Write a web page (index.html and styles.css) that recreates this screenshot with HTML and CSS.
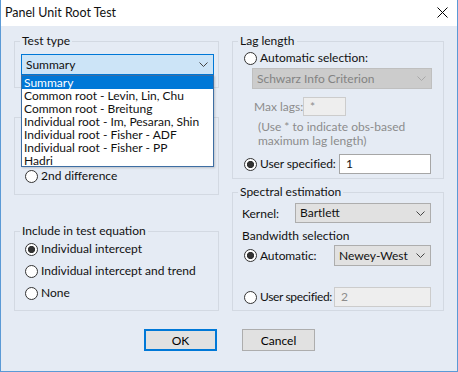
FILE: index.html
```html
<!DOCTYPE html>
<html>
<head>
<meta charset="utf-8">
<link rel="stylesheet" href="styles.css">
</head>
<body>
<div class="window">
  <div class="titlebar">
    <span class="title">Panel Unit Root Test</span>
    <svg class="close" width="11" height="11" viewBox="0 0 11 11"><path d="M0.5 0.5 L10.5 10.5 M10.5 0.5 L0.5 10.5" stroke="#000" stroke-width="1" fill="none"/></svg>
  </div>
  <div class="content">
    <div class="columns">
      <div class="col col-left">
        <fieldset class="group g-test">
          <legend>Test type</legend>
          <div class="gbody">
            <div class="combo-wrap">
              <div class="combo combo-focus"><span>Summary</span><svg class="chev" width="9" height="5" viewBox="0 0 9 5"><path d="M0.5 0.5 L4.5 4.5 L8.5 0.5" stroke="#444" fill="none"/></svg></div>
              <ul class="droplist">
                <li class="sel">Summary</li>
                <li>Common root - Levin, Lin, Chu</li>
                <li>Common root - Breitung</li>
                <li>Individual root - Im, Pesaran, Shin</li>
                <li>Individual root - Fisher - ADF</li>
                <li>Individual root - Fisher - PP</li>
                <li>Hadri</li>
              </ul>
            </div>
          </div>
        </fieldset>
        <fieldset class="group g-unit">
          <div class="gbody">
            <div class="radio-row"><span class="radio"></span><span>2nd difference</span></div>
          </div>
        </fieldset>
        <fieldset class="group g-include">
          <legend>Include in test equation</legend>
          <div class="gbody">
            <div class="radio-row first"><span class="radio checked"></span><span>Individual intercept</span></div>
            <div class="radio-row"><span class="radio"></span><span>Individual intercept and trend</span></div>
            <div class="radio-row"><span class="radio"></span><span>None</span></div>
          </div>
        </fieldset>
      </div>
      <div class="col col-right">
        <fieldset class="group g-lag">
          <legend>Lag length</legend>
          <div class="gbody">
            <div class="radio-row lag-auto"><span class="radio"></span><span>Automatic selection:</span></div>
            <div class="combo combo-disabled lag-combo"><span>Schwarz Info Criterion</span><svg class="chev" width="9" height="5" viewBox="0 0 9 5"><path d="M0.5 0.5 L4.5 4.5 L8.5 0.5" stroke="#a8a8a8" fill="none"/></svg></div>
            <div class="maxlags"><span class="dis-label maxlags-label">Max lags:</span><span class="field field-disabled maxlags-field">*</span></div>
            <div class="note dis-label">(Use * to indicate obs-based<br>maximum lag length)</div>
            <div class="radio-row user-row"><span class="radio checked"></span><span class="user-label">User specified:</span><span class="field user-field">1</span></div>
          </div>
        </fieldset>
        <fieldset class="group g-spec">
          <legend>Spectral estimation</legend>
          <div class="gbody">
            <div class="kernel-row"><span class="kernel-label">Kernel:</span><div class="combo kernel-combo"><span>Bartlett</span><svg class="chev" width="9" height="5" viewBox="0 0 9 5"><path d="M0.5 0.5 L4.5 4.5 L8.5 0.5" stroke="#444" fill="none"/></svg></div></div>
            <div class="bw-label">Bandwidth selection</div>
            <div class="radio-row bw-auto"><span class="radio checked"></span><span class="bw-text">Automatic:</span><div class="combo bw-combo"><span>Newey-West</span><svg class="chev" width="9" height="5" viewBox="0 0 9 5"><path d="M0.5 0.5 L4.5 4.5 L8.5 0.5" stroke="#444" fill="none"/></svg></div></div>
            <div class="radio-row bw-user"><span class="radio"></span><span class="bw-text bw-text-user">User specified:</span><span class="field field-disabled bw-field">2</span></div>
          </div>
        </fieldset>
      </div>
    </div>
    <div class="buttons">
      <button class="btn btn-default">OK</button>
      <button class="btn">Cancel</button>
    </div>
  </div>
</div>
</body>
</html>
```
FILE: styles.css
```css
* { box-sizing: border-box; }
html, body { margin: 0; padding: 0; }
body {
  font-family: Lato, "Noto Sans", sans-serif;
  font-size: 12px;
  color: #111;
  background: #e5ebf4;
}
.window {
  width: 458px;
  height: 372px;
  background: #e5ebf4;
  border-left: 1px solid #5b9ad6;
  border-right: 1px solid #5b9ad6;
  border-bottom: 1px solid #5b9ad6;
  display: flex;
  flex-direction: column;
}
.titlebar {
  height: 26px;
  flex: none;
  background: #fff;
  display: flex;
  align-items: center;
  padding-left: 4px;
  padding-right: 9px;
}
.title { flex: 1; font-size: 12.5px; line-height: 16px; padding-bottom: 1px; }
.close { display: block; margin-bottom: 1px; }
.content { padding: 7px 13px 0 13px; }
.columns { display: flex; gap: 13px; align-items: flex-start; }
.col { display: flex; flex-direction: column; }
.col-left { width: 205px; }
.col-right { width: 212px; }

fieldset.group {
  margin: 0;
  padding: 0;
  border: 1px solid #d3d9e2;
  min-width: 0;
  flex: none;
}
fieldset.group legend {
  padding: 0 2px;
  margin-left: 5px;
  line-height: 16px;
  height: 16px;
  white-space: nowrap;
}
fieldset.g-test { height: 55px; }
.g-test .gbody { padding-left: 6px; }
fieldset.g-unit { height: 78px; margin-top: 29px; }
.g-unit .gbody { padding-left: 10px; padding-top: 50px; }
fieldset.g-include { height: 88px; margin-top: 28px; }
.g-include .gbody { padding-left: 10px; }
fieldset.g-lag { height: 146px; }
.g-lag .gbody { padding-left: 11px; }
fieldset.g-spec { height: 127px; margin-top: 5px; }
.g-spec .gbody { padding-left: 9px; }

.combo-wrap { position: relative; margin-top: 5px; width: 193px; }
.combo {
  height: 21px;
  border: 1px solid #adadad;
  background: #e1e1e1;
  display: flex;
  align-items: center;
  padding-left: 4px;
  padding-right: 5px;
  line-height: 16px;
  flex: none;
}
.combo span { flex: 1; white-space: nowrap; overflow: hidden; }
.chev { display: block; }
.combo-focus { background: #cce4f7; border-color: #0078d7; }
.combo-disabled { background: #cccccc; border-color: #bfbfbf; color: #838383; }

.droplist {
  position: absolute;
  top: 21px;
  left: 0;
  width: 193px;
  height: 92px;
  margin: 0;
  padding: 0;
  list-style: none;
  background: #fff;
  border: 1px solid #3d6ea3;
  box-shadow: 1px 1px 2px rgba(0,0,0,0.18);
  z-index: 5;
}
.droplist li {
  height: 13px;
  line-height: 13px;
  padding-left: 2px;
  white-space: nowrap;
}
.droplist li.sel { background: #0078d7; color: #fff; }

.radio-row {
  display: flex;
  align-items: center;
  height: 16px;
  line-height: 16px;
  margin-top: 6px;
  white-space: nowrap;
}
.radio-row > span { flex: none; }
.radio-row.first { margin-top: 0; }
.g-unit .radio-row { margin-top: 0; }
.g-include .radio-row.first { margin-top: 2px; }
.radio {
  width: 13px;
  height: 13px;
  border: 1px solid #333;
  border-radius: 50%;
  background: #fff;
  margin-right: 3px;
  flex: none;
}
.radio.checked { background: radial-gradient(circle, #333 0 3.3px, #fff 3.9px); }

.lag-auto { margin-top: 1px; }
.lag-combo { margin-left: 8px; width: 180px; margin-top: 2px; }
.dis-label { color: #8c8c8c; white-space: nowrap; }
.maxlags { display: flex; align-items: center; margin-top: 8px; margin-left: 10px; height: 19px; }
.maxlags-label { width: 49px; }
.field {
  display: block;
  border: 1px solid #a6a6a6;
  background: #fff;
  padding-left: 6px;
  line-height: 16px;
}
.field-disabled { background: #eeeeee; border-color: #cccccc; color: #8c8c8c; }
.maxlags-field { width: 43px; height: 19px; line-height: 17px; }
.note { margin-top: 4px; margin-left: 14px; line-height: 14px; }
.user-row { margin-top: 6px; height: 20px; }
.user-label { width: 79px; letter-spacing: -0.1px; }
.user-field { width: 92px; height: 20px; line-height: 18px; }

.kernel-row { display: flex; align-items: center; margin-top: 3px; height: 20px; }
.kernel-label { width: 53px; }
.kernel-combo { width: 136px; height: 20px; }
.bw-label { margin-top: 6px; line-height: 14px; }
.bw-auto { margin-top: 2px; height: 21px; margin-left: 2px; }
.bw-text { width: 74px; letter-spacing: -0.1px; }
.bw-text-user { letter-spacing: -0.35px; }
.bw-combo { width: 97px; }
.bw-user { margin-top: 21px; height: 20px; margin-left: 2px; }
.bw-field { width: 97px; height: 20px; line-height: 18px; }

.buttons { display: flex; justify-content: center; gap: 25px; margin-top: 18px; }
.btn {
  width: 73px;
  height: 22px;
  font-family: inherit;
  font-size: inherit;
  border: 1px solid #adadad;
  background: #e1e1e1;
  padding: 0;
  margin: 0;
  color: #000;
}
.btn-default { border: 2px solid #0078d7; margin-left: 1px; }
```
